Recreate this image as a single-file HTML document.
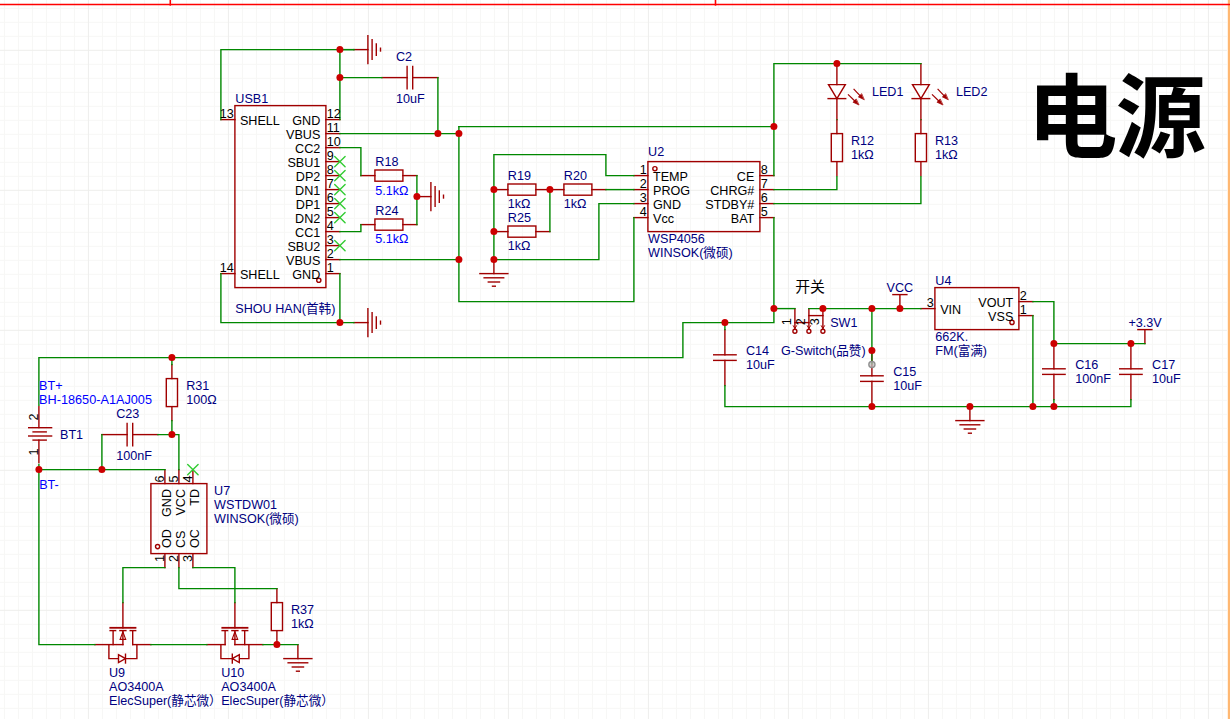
<!DOCTYPE html>
<html lang="zh"><head><meta charset="utf-8"><title>电源</title>
<style>
html,body{margin:0;padding:0;background:#fff;overflow:hidden}
svg{display:block;font-family:"Liberation Sans","Noto Sans CJK SC",sans-serif}
</style></head><body>
<svg width="1230" height="719" viewBox="0 0 1230 719">
<rect width="1230" height="719" fill="#fff"/>
<path d="M4.4 0V719M18.4 0V719M32.4 0V719M46.4 0V719M60.4 0V719M74.4 0V719M102.4 0V719M116.4 0V719M130.4 0V719M144.4 0V719M158.4 0V719M172.4 0V719M186.4 0V719M200.4 0V719M214.4 0V719M242.4 0V719M256.4 0V719M270.4 0V719M284.4 0V719M298.4 0V719M312.4 0V719M326.4 0V719M340.4 0V719M354.4 0V719M382.4 0V719M396.4 0V719M410.4 0V719M424.4 0V719M438.4 0V719M452.4 0V719M466.4 0V719M480.4 0V719M494.4 0V719M522.4 0V719M536.4 0V719M550.4 0V719M564.4 0V719M578.4 0V719M592.4 0V719M606.4 0V719M620.4 0V719M634.4 0V719M662.4 0V719M676.4 0V719M690.4 0V719M704.4 0V719M718.4 0V719M732.4 0V719M746.4 0V719M760.4 0V719M774.4 0V719M802.4 0V719M816.4 0V719M830.4 0V719M844.4 0V719M858.4 0V719M872.4 0V719M886.4 0V719M900.4 0V719M914.4 0V719M942.4 0V719M956.4 0V719M970.4 0V719M984.4 0V719M998.4 0V719M1012.4 0V719M1026.4 0V719M1040.4 0V719M1054.4 0V719M1082.4 0V719M1096.4 0V719M1110.4 0V719M1124.4 0V719M1138.4 0V719M1152.4 0V719M1166.4 0V719M1180.4 0V719M1194.4 0V719M1222.4 0V719M0 8.3H1227M0 22.3H1227M0 36.3H1227M0 64.3H1227M0 78.3H1227M0 92.3H1227M0 106.3H1227M0 120.3H1227M0 134.3H1227M0 148.3H1227M0 162.3H1227M0 176.3H1227M0 204.3H1227M0 218.3H1227M0 232.3H1227M0 246.3H1227M0 260.3H1227M0 274.3H1227M0 288.3H1227M0 302.3H1227M0 316.3H1227M0 344.3H1227M0 358.3H1227M0 372.3H1227M0 386.3H1227M0 400.3H1227M0 414.3H1227M0 428.3H1227M0 442.3H1227M0 456.3H1227M0 484.3H1227M0 498.3H1227M0 512.3H1227M0 526.3H1227M0 540.3H1227M0 554.3H1227M0 568.3H1227M0 582.3H1227M0 596.3H1227M0 624.3H1227M0 638.3H1227M0 652.3H1227M0 666.3H1227M0 680.3H1227M0 694.3H1227M0 708.3H1227" stroke="#f7f7f5" stroke-width="1" fill="none"/>
<path d="M88.4 0V719M228.4 0V719M368.4 0V719M508.4 0V719M648.4 0V719M788.4 0V719M928.4 0V719M1068.4 0V719M1208.4 0V719M0 50.3H1227M0 190.3H1227M0 330.3H1227M0 470.3H1227M0 610.3H1227" stroke="#eeeeec" stroke-width="1" fill="none"/>
<rect x="1227.8" y="0" width="2.2" height="719" fill="#ffb872"/>
<g stroke="#ff0000" stroke-width="1.6" fill="none"><path d="M0 4.5H1230M170.3 0V5.7M715.5 0V5.7"/></g>
<g stroke="#a00000" stroke-width="1.4" fill="none" stroke-linecap="square" stroke-linejoin="miter">
<rect x="234.9" y="105.6" width="91" height="182"/>
<line x1="325.9" y1="119.6" x2="339.9" y2="119.6"/>
<line x1="325.9" y1="133.6" x2="339.9" y2="133.6"/>
<line x1="325.9" y1="147.6" x2="339.9" y2="147.6"/>
<line x1="325.9" y1="161.6" x2="339.9" y2="161.6"/>
<line x1="325.9" y1="175.6" x2="339.9" y2="175.6"/>
<line x1="325.9" y1="189.6" x2="339.9" y2="189.6"/>
<line x1="325.9" y1="203.6" x2="339.9" y2="203.6"/>
<line x1="325.9" y1="217.6" x2="339.9" y2="217.6"/>
<line x1="325.9" y1="231.6" x2="339.9" y2="231.6"/>
<line x1="325.9" y1="245.6" x2="339.9" y2="245.6"/>
<line x1="325.9" y1="259.6" x2="339.9" y2="259.6"/>
<line x1="325.9" y1="273.6" x2="339.9" y2="273.6"/>
<line x1="220.9" y1="119.6" x2="234.9" y2="119.6"/>
<line x1="220.9" y1="273.6" x2="234.9" y2="273.6"/>
<circle cx="318.8" cy="280.3" r="2.1"/>
<line x1="353.9" y1="49.6" x2="367.9" y2="49.6"/>
<line x1="367.9" y1="35.6" x2="367.9" y2="63.6"/>
<line x1="372.1" y1="39.8" x2="372.1" y2="59.4"/>
<line x1="376.3" y1="44" x2="376.3" y2="55.2"/>
<line x1="380.5" y1="48.2" x2="380.5" y2="51"/>
<line x1="381.9" y1="77.6" x2="407.1" y2="77.6"/>
<line x1="412.7" y1="77.6" x2="437.9" y2="77.6"/>
<line x1="407.1" y1="66.4" x2="407.1" y2="88.8"/>
<line x1="412.7" y1="66.4" x2="412.7" y2="88.8"/>
<line x1="360.9" y1="175.6" x2="374.9" y2="175.6"/>
<line x1="402.9" y1="175.6" x2="416.9" y2="175.6"/>
<rect x="374.9" y="170" width="28" height="11.2"/>
<line x1="360.9" y1="224.6" x2="374.9" y2="224.6"/>
<line x1="402.9" y1="224.6" x2="416.9" y2="224.6"/>
<rect x="374.9" y="219" width="28" height="11.2"/>
<line x1="416.9" y1="196.6" x2="430.9" y2="196.6"/>
<line x1="430.9" y1="182.6" x2="430.9" y2="210.6"/>
<line x1="435.1" y1="186.8" x2="435.1" y2="206.4"/>
<line x1="439.3" y1="191" x2="439.3" y2="202.2"/>
<line x1="443.5" y1="195.2" x2="443.5" y2="198"/>
<line x1="353.9" y1="322.6" x2="367.9" y2="322.6"/>
<line x1="367.9" y1="308.6" x2="367.9" y2="336.6"/>
<line x1="372.1" y1="312.8" x2="372.1" y2="332.4"/>
<line x1="376.3" y1="317" x2="376.3" y2="328.2"/>
<line x1="380.5" y1="321.2" x2="380.5" y2="324"/>
<rect x="647.9" y="161.6" width="112" height="70"/>
<line x1="633.9" y1="175.6" x2="647.9" y2="175.6"/>
<line x1="633.9" y1="189.6" x2="647.9" y2="189.6"/>
<line x1="633.9" y1="203.6" x2="647.9" y2="203.6"/>
<line x1="633.9" y1="217.6" x2="647.9" y2="217.6"/>
<line x1="759.9" y1="175.6" x2="773.9" y2="175.6"/>
<line x1="759.9" y1="189.6" x2="773.9" y2="189.6"/>
<line x1="759.9" y1="203.6" x2="773.9" y2="203.6"/>
<line x1="759.9" y1="217.6" x2="773.9" y2="217.6"/>
<circle cx="654.9" cy="168.7" r="2.1"/>
<line x1="493.9" y1="189.6" x2="507.9" y2="189.6"/>
<line x1="535.9" y1="189.6" x2="549.9" y2="189.6"/>
<rect x="507.9" y="184" width="28" height="11.2"/>
<line x1="549.9" y1="189.6" x2="563.9" y2="189.6"/>
<line x1="591.9" y1="189.6" x2="605.9" y2="189.6"/>
<rect x="563.9" y="184" width="28" height="11.2"/>
<line x1="493.9" y1="231.6" x2="507.9" y2="231.6"/>
<line x1="535.9" y1="231.6" x2="549.9" y2="231.6"/>
<rect x="507.9" y="226" width="28" height="11.2"/>
<line x1="493.9" y1="259.6" x2="493.9" y2="273.6"/>
<line x1="479.9" y1="273.6" x2="507.9" y2="273.6"/>
<line x1="484.1" y1="277.8" x2="503.7" y2="277.8"/>
<line x1="488.3" y1="282" x2="499.5" y2="282"/>
<line x1="492.5" y1="286.2" x2="495.3" y2="286.2"/>
<line x1="836.9" y1="63.6" x2="836.9" y2="84.6"/>
<line x1="836.9" y1="98.6" x2="836.9" y2="119.6"/>
<path d="M828.5 84.6L845.3 84.6L836.9 98.6Z"/>
<line x1="828.1" y1="98.6" x2="845.7" y2="98.6"/>
<line x1="853.6" y1="88.9" x2="861.4" y2="97.1" stroke-width="1.2" stroke-linecap="butt"/>
<path d="M863.9 99.6L858.36 96.88L861.39 93.97Z" fill="#a00000" stroke-width="0.7"/>
<line x1="848" y1="94.4" x2="856.1" y2="102.3" stroke-width="1.2" stroke-linecap="butt"/>
<path d="M858.6 104.8L852.99 102.24L855.93 99.24Z" fill="#a00000" stroke-width="0.7"/>
<line x1="920.9" y1="63.6" x2="920.9" y2="84.6"/>
<line x1="920.9" y1="98.6" x2="920.9" y2="119.6"/>
<path d="M912.5 84.6L929.3 84.6L920.9 98.6Z"/>
<line x1="912.1" y1="98.6" x2="929.7" y2="98.6"/>
<line x1="937.6" y1="88.9" x2="945.4" y2="97.1" stroke-width="1.2" stroke-linecap="butt"/>
<path d="M947.9 99.6L942.36 96.88L945.39 93.97Z" fill="#a00000" stroke-width="0.7"/>
<line x1="932" y1="94.4" x2="940.1" y2="102.3" stroke-width="1.2" stroke-linecap="butt"/>
<path d="M942.6 104.8L936.99 102.24L939.93 99.24Z" fill="#a00000" stroke-width="0.7"/>
<line x1="836.9" y1="119.6" x2="836.9" y2="133.6"/>
<line x1="836.9" y1="161.6" x2="836.9" y2="175.6"/>
<rect x="831.3" y="133.6" width="11.2" height="28"/>
<line x1="920.9" y1="119.6" x2="920.9" y2="133.6"/>
<line x1="920.9" y1="161.6" x2="920.9" y2="175.6"/>
<rect x="915.3" y="133.6" width="11.2" height="28"/>
<line x1="794.9" y1="308.6" x2="794.9" y2="329"/>
<circle cx="794.9" cy="331.2" r="2"/>
<path d="M793.3 325.8L794.9 328.6L796.5 325.8" stroke-width="1"/>
<line x1="808.9" y1="308.6" x2="808.9" y2="329"/>
<circle cx="808.9" cy="331.2" r="2"/>
<path d="M807.3 325.8L808.9 328.6L810.5 325.8" stroke-width="1"/>
<line x1="822.9" y1="308.6" x2="822.9" y2="329"/>
<circle cx="822.9" cy="331.2" r="2"/>
<path d="M821.3 325.8L822.9 328.6L824.5 325.8" stroke-width="1"/>
<line x1="808.9" y1="315.6" x2="822.9" y2="315.6"/>
<line x1="794.9" y1="322.6" x2="808.9" y2="322.6"/>
<line x1="899.9" y1="308.6" x2="899.9" y2="294.6"/>
<line x1="892.9" y1="294.6" x2="906.9" y2="294.6"/>
<line x1="724.9" y1="329.6" x2="724.9" y2="354.8"/>
<line x1="724.9" y1="360.4" x2="724.9" y2="385.6"/>
<line x1="713.7" y1="354.8" x2="736.1" y2="354.8"/>
<line x1="713.7" y1="360.4" x2="736.1" y2="360.4"/>
<line x1="871.9" y1="350.6" x2="871.9" y2="375.8"/>
<line x1="871.9" y1="381.4" x2="871.9" y2="406.6"/>
<line x1="860.7" y1="375.8" x2="883.1" y2="375.8"/>
<line x1="860.7" y1="381.4" x2="883.1" y2="381.4"/>
<line x1="969.9" y1="406.6" x2="969.9" y2="420.6"/>
<line x1="955.9" y1="420.6" x2="983.9" y2="420.6"/>
<line x1="960.1" y1="424.8" x2="979.7" y2="424.8"/>
<line x1="964.3" y1="429" x2="975.5" y2="429"/>
<line x1="968.5" y1="433.2" x2="971.3" y2="433.2"/>
<rect x="934.9" y="287.6" width="84" height="42"/>
<line x1="920.9" y1="308.6" x2="934.9" y2="308.6"/>
<line x1="1018.9" y1="301.6" x2="1032.9" y2="301.6"/>
<line x1="1018.9" y1="315.6" x2="1032.9" y2="315.6"/>
<circle cx="1012" cy="322.4" r="2.1"/>
<line x1="1144.9" y1="343.6" x2="1144.9" y2="329.6"/>
<line x1="1137.9" y1="329.6" x2="1151.9" y2="329.6"/>
<line x1="1053.9" y1="343.6" x2="1053.9" y2="368.8"/>
<line x1="1053.9" y1="374.4" x2="1053.9" y2="399.6"/>
<line x1="1042.7" y1="368.8" x2="1065.1" y2="368.8"/>
<line x1="1042.7" y1="374.4" x2="1065.1" y2="374.4"/>
<line x1="1130.9" y1="343.6" x2="1130.9" y2="368.8"/>
<line x1="1130.9" y1="374.4" x2="1130.9" y2="399.6"/>
<line x1="1119.7" y1="368.8" x2="1142.1" y2="368.8"/>
<line x1="1119.7" y1="374.4" x2="1142.1" y2="374.4"/>
<line x1="38.9" y1="406.6" x2="38.9" y2="427.6"/>
<line x1="38.9" y1="440.2" x2="38.9" y2="462.6"/>
<line x1="28.7" y1="427.7" x2="51.6" y2="427.7"/>
<line x1="33.1" y1="431.9" x2="46.2" y2="431.9"/>
<line x1="28.7" y1="436" x2="51.6" y2="436"/>
<line x1="33.1" y1="440.1" x2="46.2" y2="440.1"/>
<line x1="171.9" y1="364.6" x2="171.9" y2="378.6"/>
<line x1="171.9" y1="406.6" x2="171.9" y2="420.6"/>
<rect x="166.3" y="378.6" width="11.2" height="28"/>
<line x1="101.9" y1="434.6" x2="127.1" y2="434.6"/>
<line x1="132.7" y1="434.6" x2="157.9" y2="434.6"/>
<line x1="127.1" y1="423.4" x2="127.1" y2="445.8"/>
<line x1="132.7" y1="423.4" x2="132.7" y2="445.8"/>
<rect x="150.9" y="483.6" width="56" height="70"/>
<line x1="164.9" y1="469.6" x2="164.9" y2="483.6"/>
<line x1="164.9" y1="553.6" x2="164.9" y2="567.6"/>
<line x1="178.9" y1="469.6" x2="178.9" y2="483.6"/>
<line x1="178.9" y1="553.6" x2="178.9" y2="567.6"/>
<line x1="192.9" y1="469.6" x2="192.9" y2="483.6"/>
<line x1="192.9" y1="553.6" x2="192.9" y2="567.6"/>
<circle cx="157.6" cy="546.6" r="2.1"/>
<line x1="276.9" y1="588.6" x2="276.9" y2="602.6"/>
<line x1="276.9" y1="630.6" x2="276.9" y2="644.6"/>
<rect x="271.3" y="602.6" width="11.2" height="28"/>
<line x1="122.9" y1="602.6" x2="122.9" y2="627.8"/>
<line x1="110.3" y1="627.8" x2="135.5" y2="627.8" stroke-width="1.8"/>
<line x1="110.1" y1="630.6" x2="115.6" y2="630.6"/>
<line x1="119.9" y1="630.6" x2="125.9" y2="630.6"/>
<line x1="130.2" y1="630.6" x2="135.7" y2="630.6"/>
<line x1="113.1" y1="630.6" x2="113.1" y2="644.6"/>
<line x1="132.7" y1="630.6" x2="132.7" y2="644.6"/>
<line x1="122.9" y1="630.6" x2="122.9" y2="644.6"/>
<line x1="94.9" y1="644.6" x2="122.9" y2="644.6"/>
<line x1="132.7" y1="644.6" x2="150.9" y2="644.6"/>
<path d="M122.9 631.8L120.1 639.4L125.7 639.4Z" stroke-width="1.1"/>
<path d="M108.9 644.6L108.9 658.6L136.9 658.6L136.9 644.6"/>
<line x1="125.5" y1="654.2" x2="125.5" y2="663"/>
<path d="M118.5 654.6L118.5 662.6L125.5 658.6Z" fill="#fff"/>
<line x1="234.9" y1="602.6" x2="234.9" y2="627.8"/>
<line x1="222.3" y1="627.8" x2="247.5" y2="627.8" stroke-width="1.8"/>
<line x1="222.1" y1="630.6" x2="227.6" y2="630.6"/>
<line x1="231.9" y1="630.6" x2="237.9" y2="630.6"/>
<line x1="242.2" y1="630.6" x2="247.7" y2="630.6"/>
<line x1="225.1" y1="630.6" x2="225.1" y2="644.6"/>
<line x1="244.7" y1="630.6" x2="244.7" y2="644.6"/>
<line x1="234.9" y1="630.6" x2="234.9" y2="644.6"/>
<line x1="262.9" y1="644.6" x2="234.9" y2="644.6"/>
<line x1="225.1" y1="644.6" x2="206.9" y2="644.6"/>
<path d="M234.9 631.8L232.1 639.4L237.7 639.4Z" stroke-width="1.1"/>
<path d="M220.9 644.6L220.9 658.6L248.9 658.6L248.9 644.6"/>
<line x1="232.3" y1="654.2" x2="232.3" y2="663"/>
<path d="M239.3 654.6L239.3 662.6L232.3 658.6Z" fill="#fff"/>
<line x1="297.9" y1="644.6" x2="297.9" y2="658.6"/>
<line x1="283.9" y1="658.6" x2="311.9" y2="658.6"/>
<line x1="288.1" y1="662.8" x2="307.7" y2="662.8"/>
<line x1="292.3" y1="667" x2="303.5" y2="667"/>
<line x1="296.5" y1="671.2" x2="299.3" y2="671.2"/>
</g>
<g stroke="#008800" stroke-width="1.4" fill="none" stroke-linecap="square">
<polyline points="220.9,119.6 220.9,49.6 353.9,49.6"/>
<polyline points="339.9,119.6 339.9,49.6"/>
<polyline points="339.9,49.6 353.9,49.6"/>
<polyline points="339.9,77.6 381.9,77.6"/>
<polyline points="437.9,77.6 437.9,133.6"/>
<polyline points="339.9,133.6 458.9,133.6"/>
<polyline points="458.9,126.6 458.9,301.6 633.9,301.6 633.9,217.6"/>
<polyline points="458.9,126.6 773.9,126.6"/>
<polyline points="339.9,259.6 458.9,259.6"/>
<polyline points="339.9,147.6 360.9,147.6 360.9,175.6"/>
<polyline points="339.9,231.6 360.9,231.6 360.9,224.6"/>
<polyline points="416.9,175.6 416.9,224.6"/>
<polyline points="339.9,273.6 339.9,322.6"/>
<polyline points="220.9,273.6 220.9,322.6 353.9,322.6"/>
<polyline points="493.9,259.6 493.9,154.6 605.9,154.6 605.9,175.6 633.9,175.6"/>
<polyline points="605.9,189.6 633.9,189.6"/>
<polyline points="549.9,231.6 549.9,189.6"/>
<polyline points="493.9,259.6 598.9,259.6 598.9,203.6 633.9,203.6"/>
<polyline points="773.9,175.6 773.9,63.6 920.9,63.6"/>
<polyline points="836.9,176.7 836.9,189.6 773.9,189.6"/>
<polyline points="920.9,176.7 920.9,203.6 773.9,203.6"/>
<polyline points="773.9,217.6 773.9,322.6 682.9,322.6 682.9,357.6 38.9,357.6 38.9,405.3"/>
<polyline points="773.9,308.6 794.9,308.6"/>
<polyline points="808.9,308.6 920.9,308.6"/>
<polyline points="724.9,322.6 724.9,329.6"/>
<polyline points="724.9,385.6 724.9,406.6 1130.9,406.6 1130.9,399.6"/>
<polyline points="871.9,308.6 871.9,350.6"/>
<polyline points="1032.9,301.6 1053.9,301.6 1053.9,343.6"/>
<polyline points="1032.9,315.6 1032.9,406.6"/>
<polyline points="1053.9,343.6 1144.9,343.6"/>
<polyline points="1053.9,399.6 1053.9,406.6"/>
<polyline points="38.9,469.6 38.9,644.6 94.9,644.6"/>
<polyline points="38.9,464.4 38.9,469.6"/>
<polyline points="171.9,357.6 171.9,364.6"/>
<polyline points="171.9,420.6 171.9,434.6"/>
<polyline points="157.9,434.6 178.9,434.6 178.9,469.6"/>
<polyline points="101.9,434.6 101.9,469.6"/>
<polyline points="38.9,469.6 164.9,469.6"/>
<polyline points="164.9,567.6 122.9,567.6 122.9,602.6"/>
<polyline points="178.9,567.6 178.9,588.6 276.9,588.6"/>
<polyline points="192.9,567.6 234.9,567.6 234.9,602.6"/>
<polyline points="150.9,644.6 206.9,644.6"/>
<polyline points="262.9,644.6 297.9,644.6"/>
</g>
<g stroke="#33cc33" stroke-width="1.4" fill="none" stroke-linecap="round">
<path d="M334.7 156.4L345.1 166.8M334.7 166.8L345.1 156.4"/>
<path d="M334.7 170.4L345.1 180.8M334.7 180.8L345.1 170.4"/>
<path d="M334.7 184.4L345.1 194.8M334.7 194.8L345.1 184.4"/>
<path d="M334.7 198.4L345.1 208.8M334.7 208.8L345.1 198.4"/>
<path d="M334.7 212.4L345.1 222.8M334.7 222.8L345.1 212.4"/>
<path d="M334.7 240.4L345.1 250.8M334.7 250.8L345.1 240.4"/>
<path d="M187.7 464.4L198.1 474.8M187.7 474.8L198.1 464.4"/>
</g>
<path d="M871.9 350.6V364.6" stroke="#0c7c08" stroke-width="1.4"/>
<g fill="#2a8a1a"><rect x="836.3" y="119" width="1.2" height="1.2"/><rect x="920.3" y="119" width="1.2" height="1.2"/></g>
<g fill="#cc0000">
<circle cx="339.9" cy="49.6" r="3.5"/>
<circle cx="339.9" cy="77.6" r="3.5"/>
<circle cx="437.9" cy="133.6" r="3.5"/>
<circle cx="458.9" cy="133.6" r="3.5"/>
<circle cx="458.9" cy="259.6" r="3.5"/>
<circle cx="416.9" cy="196.6" r="3.5"/>
<circle cx="339.9" cy="322.6" r="3.5"/>
<circle cx="493.9" cy="189.6" r="3.5"/>
<circle cx="549.9" cy="189.6" r="3.5"/>
<circle cx="493.9" cy="231.6" r="3.5"/>
<circle cx="493.9" cy="259.6" r="3.5"/>
<circle cx="773.9" cy="126.6" r="3.5"/>
<circle cx="836.9" cy="63.6" r="3.5"/>
<circle cx="773.9" cy="308.6" r="3.5"/>
<circle cx="724.9" cy="322.6" r="3.5"/>
<circle cx="822.9" cy="308.6" r="3.5"/>
<circle cx="871.9" cy="308.6" r="3.5"/>
<circle cx="899.9" cy="308.6" r="3.5"/>
<circle cx="871.9" cy="350.6" r="3.5"/>
<circle cx="871.9" cy="406.6" r="3.5"/>
<circle cx="969.9" cy="406.6" r="3.5"/>
<circle cx="1032.9" cy="406.6" r="3.5"/>
<circle cx="1053.9" cy="343.6" r="3.5"/>
<circle cx="1130.9" cy="343.6" r="3.5"/>
<circle cx="1053.9" cy="406.6" r="3.5"/>
<circle cx="38.9" cy="469.6" r="3.5"/>
<circle cx="171.9" cy="357.6" r="3.5"/>
<circle cx="171.9" cy="434.6" r="3.5"/>
<circle cx="101.9" cy="469.6" r="3.5"/>
<circle cx="276.9" cy="644.6" r="3.5"/>
</g>
<circle cx="871.9" cy="364.6" r="3.1" fill="#bdbdbd" fill-opacity="0.75" stroke="#8f8f8f" stroke-width="1.3"/>
<g font-size="12.6" fill="#000080">
<text x="326.7" y="118" fill="#000000">12</text>
<text x="320.3" y="124.6" text-anchor="end" fill="#000000">GND</text>
<text x="326.7" y="132" fill="#000000">11</text>
<text x="320.3" y="138.6" text-anchor="end" fill="#000000">VBUS</text>
<text x="326.7" y="146" fill="#000000">10</text>
<text x="320.3" y="152.6" text-anchor="end" fill="#000000">CC2</text>
<text x="326.7" y="160" fill="#000000">9</text>
<text x="320.3" y="166.6" text-anchor="end" fill="#000000">SBU1</text>
<text x="326.7" y="174" fill="#000000">8</text>
<text x="320.3" y="180.6" text-anchor="end" fill="#000000">DP2</text>
<text x="326.7" y="188" fill="#000000">7</text>
<text x="320.3" y="194.6" text-anchor="end" fill="#000000">DN1</text>
<text x="326.7" y="202" fill="#000000">6</text>
<text x="320.3" y="208.6" text-anchor="end" fill="#000000">DP1</text>
<text x="326.7" y="216" fill="#000000">5</text>
<text x="320.3" y="222.6" text-anchor="end" fill="#000000">DN2</text>
<text x="326.7" y="230" fill="#000000">4</text>
<text x="320.3" y="236.6" text-anchor="end" fill="#000000">CC1</text>
<text x="326.7" y="244" fill="#000000">3</text>
<text x="320.3" y="250.6" text-anchor="end" fill="#000000">SBU2</text>
<text x="326.7" y="258" fill="#000000">2</text>
<text x="320.3" y="264.6" text-anchor="end" fill="#000000">VBUS</text>
<text x="326.7" y="272" fill="#000000">1</text>
<text x="320.3" y="278.6" text-anchor="end" fill="#000000">GND</text>
<text x="233.8" y="118" text-anchor="end" fill="#000000">13</text>
<text x="239.9" y="124.6" fill="#000000">SHELL</text>
<text x="233.8" y="272" text-anchor="end" fill="#000000">14</text>
<text x="239.9" y="278.6" fill="#000000">SHELL</text>
<text x="235.3" y="102.9">USB1</text>
<text x="235.3" y="312.9">SHOU HAN(首韩)</text>
<text x="396" y="60.7">C2</text>
<text x="396" y="102.9">10uF</text>
<text x="375.3" y="165.6">R18</text>
<text x="375.3" y="194.6" fill="#0000ff">5.1kΩ</text>
<text x="375.3" y="214.6">R24</text>
<text x="375.3" y="243.4" fill="#0000ff">5.1kΩ</text>
<text x="646.8" y="174" text-anchor="end" fill="#000000">1</text>
<text x="653" y="180.6" fill="#000000">TEMP</text>
<text x="646.8" y="188" text-anchor="end" fill="#000000">2</text>
<text x="653" y="194.6" fill="#000000">PROG</text>
<text x="646.8" y="202" text-anchor="end" fill="#000000">3</text>
<text x="653" y="208.6" fill="#000000">GND</text>
<text x="646.8" y="216" text-anchor="end" fill="#000000">4</text>
<text x="653" y="222.6" fill="#000000">Vcc</text>
<text x="760.7" y="174" fill="#000000">8</text>
<text x="754.3" y="180.6" text-anchor="end" fill="#000000">CE</text>
<text x="760.7" y="188" fill="#000000">7</text>
<text x="754.3" y="194.6" text-anchor="end" fill="#000000">CHRG#</text>
<text x="760.7" y="202" fill="#000000">6</text>
<text x="754.3" y="208.6" text-anchor="end" fill="#000000">STDBY#</text>
<text x="760.7" y="216" fill="#000000">5</text>
<text x="754.3" y="222.6" text-anchor="end" fill="#000000">BAT</text>
<text x="648.1" y="155.6">U2</text>
<text x="648.1" y="243.2">WSP4056</text>
<text x="648.1" y="257.2">WINSOK(微硕)</text>
<text x="507.8" y="180.4">R19</text>
<text x="507.8" y="208">1kΩ</text>
<text x="563.8" y="180.4">R20</text>
<text x="563.8" y="208">1kΩ</text>
<text x="507.8" y="221.5">R25</text>
<text x="507.8" y="250">1kΩ</text>
<text x="871.9" y="95.7">LED1</text>
<text x="955.9" y="95.7">LED2</text>
<text x="850.9" y="144.5">R12</text>
<text x="850.9" y="158.8">1kΩ</text>
<text x="934.9" y="144.5">R13</text>
<text x="934.9" y="158.8">1kΩ</text>
<text transform="translate(790.9 325.2) rotate(-90)" fill="#000000">1</text>
<text transform="translate(804.9 325.2) rotate(-90)" fill="#000000">2</text>
<text transform="translate(818.9 325.2) rotate(-90)" fill="#000000">3</text>
<text x="886.6" y="291.6">VCC</text>
<text x="795.2" y="292" fill="#000000" font-size="14.9">开关</text>
<text x="830.2" y="326.5">SW1</text>
<text x="781" y="354.5">G-Switch(品赞)</text>
<text x="746" y="354.5">C14</text>
<text x="746" y="368.8">10uF</text>
<text x="893.2" y="375.5">C15</text>
<text x="893.2" y="389.6">10uF</text>
<text x="933.8" y="307" text-anchor="end" fill="#000000">3</text>
<text x="940.2" y="313.6" fill="#000000">VIN</text>
<text x="1019.7" y="300" fill="#000000">2</text>
<text x="1013.3" y="306.6" text-anchor="end" fill="#000000">VOUT</text>
<text x="1019.7" y="314" fill="#000000">1</text>
<text x="1013.3" y="320.6" text-anchor="end" fill="#000000">VSS</text>
<text x="935.3" y="284.7">U4</text>
<text x="935.3" y="340.8">662K.</text>
<text x="935.3" y="354.9">FM(富满)</text>
<text x="1128.5" y="327.3">+3.3V</text>
<text x="1075.2" y="369.1">C16</text>
<text x="1075.2" y="383.3">100nF</text>
<text x="1152.1" y="369.1">C17</text>
<text x="1152.1" y="383.3">10uF</text>
<text transform="translate(38.1 420.6) rotate(-90)" fill="#000000">2</text>
<text transform="translate(38.1 455.6) rotate(-90)" fill="#000000">1</text>
<text x="39.1" y="390.3" fill="#0000ff">BT+</text>
<text x="39.1" y="404.2" fill="#0000ff" font-size="12.7">BH-18650-A1AJ005</text>
<text x="60" y="439.4">BT1</text>
<text x="39.2" y="488.5" fill="#0000ff">BT-</text>
<text x="186.2" y="390.3">R31</text>
<text x="186.2" y="404.2">100Ω</text>
<text x="116.2" y="418">C23</text>
<text x="116.2" y="460.3">100nF</text>
<text transform="translate(163.7 482.4) rotate(-90)" fill="#000000">6</text>
<text transform="translate(171.4 489) rotate(-90)" text-anchor="end" fill="#000000">GND</text>
<text transform="translate(163.7 554.9) rotate(-90)" text-anchor="end" fill="#000000">1</text>
<text transform="translate(171.4 548) rotate(-90)" fill="#000000">OD</text>
<text transform="translate(177.7 482.4) rotate(-90)" fill="#000000">5</text>
<text transform="translate(185.4 489) rotate(-90)" text-anchor="end" fill="#000000">VCC</text>
<text transform="translate(177.7 554.9) rotate(-90)" text-anchor="end" fill="#000000">2</text>
<text transform="translate(185.4 548) rotate(-90)" fill="#000000">CS</text>
<text transform="translate(191.7 482.4) rotate(-90)" fill="#000000">4</text>
<text transform="translate(199.4 489) rotate(-90)" text-anchor="end" fill="#000000">TD</text>
<text transform="translate(191.7 554.9) rotate(-90)" text-anchor="end" fill="#000000">3</text>
<text transform="translate(199.4 548) rotate(-90)" fill="#000000">OC</text>
<text x="214.1" y="494.6">U7</text>
<text x="214.1" y="508.6">WSTDW01</text>
<text x="214.1" y="522.7">WINSOK(微硕)</text>
<text x="290.9" y="614.4">R37</text>
<text x="290.9" y="627.6">1kΩ</text>
<text x="109" y="677.2">U9</text>
<text x="109" y="690.9">AO3400A</text>
<text x="109" y="704.9">ElecSuper(静芯微）</text>
<text x="221.2" y="677.2">U10</text>
<text x="221.2" y="690.9">AO3400A</text>
<text x="221.2" y="704.9">ElecSuper(静芯微）</text>
<text x="1027.1" y="150.3" fill="#000000" font-size="90.5" font-weight="bold" letter-spacing="-2.2">电源</text>
</g>
</svg>
</body></html>
